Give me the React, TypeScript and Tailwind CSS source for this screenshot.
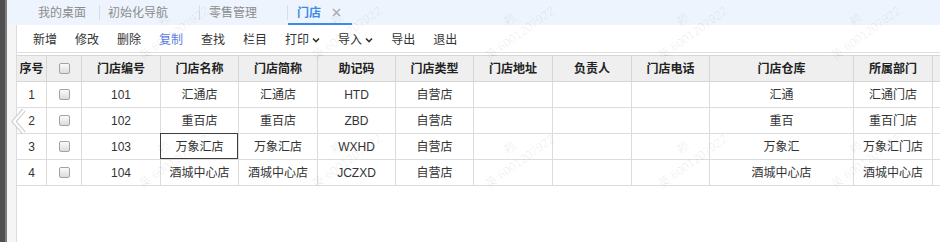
const font = 'font-["Liberation_Sans","Noto_Sans_CJK_SC",sans-serif]';

const columns = ['序号', '', '门店编号', '门店名称', '门店简称', '助记码', '门店类型', '门店地址', '负责人', '门店电话', '门店仓库', '所属部门', ''];

const rows = [
    ['1', '101', '汇通店', '汇通店', 'HTD', '自营店', '', '', '', '汇通', '汇通门店'],
    ['2', '102', '重百店', '重百店', 'ZBD', '自营店', '', '', '', '重百', '重百门店'],
    ['3', '103', '万象汇店', '万象汇店', 'WXHD', '自营店', '', '', '', '万象汇', '万象汇门店'],
    ['4', '104', '酒城中心店', '酒城中心店', 'JCZXD', '自营店', '', '', '', '酒城中心店', '酒城中心店'],
];

const gridCols = 'grid grid-cols-[30px_35px_79px_78px_79px_78px_78px_79px_79px_78px_144px_79px_79px]';

const Checkbox = () => (
    <div className="w-[11px] h-[11px] rounded-[2px] border border-[#a3a3a3] bg-linear-to-b from-[#fbfbfb] to-[#dcdcdc]" />
);

const Caret = () => (
    <svg width="8" height="6" viewBox="0 0 8 6" className="ml-[3px]">
        <path d="M1 1.5 L4 4.5 L7 1.5" fill="none" stroke="#333" strokeWidth="1.6" />
    </svg>
);

const Sep = () => <span className="w-px h-[15px] bg-[#d9dee6]" />;

const toolbar = ['新增', '修改', '删除', '复制', '查找', '栏目', '打印', '导入', '导出', '退出'];

const Watermark = () => (
    <div className="flex items-center justify-center">
        <div className="flex flex-col items-center -rotate-[36deg] text-[12px] leading-[17px] text-black/[0.07]">
            <span>赖</span>
            <span>英:6001207922</span>
        </div>
    </div>
);

export default function App() {
    return (
        <div className={`relative flex w-[940px] h-[242px] overflow-hidden bg-white ${font}`}>
            <div className="w-[5px] bg-[#4f4f4f]" />
            <div className="w-[2px] bg-[#7d7d7d]" />

            <div className="flex-1 flex flex-col min-w-0">
                {/* tabs */}
                <div className="h-[25px] bg-[#eef4fd] flex items-center text-[12px] text-[#8c8c8c]">
                    <div className="w-[92px] pl-[31px]">我的桌面</div>
                    <Sep />
                    <div className="w-[99px] pl-[8px]">初始化导航</div>
                    <Sep />
                    <div className="w-[87px] pl-[9px]">零售管理</div>
                    <Sep />
                    <div className="h-full w-[64px] pl-[9px] flex items-center border-b-2 border-[#3a8ee6] pt-[2px]">
                        <span className="text-[#3a8ee6] font-semibold">门店</span>
                        <svg width="9" height="9" viewBox="0 0 9 9" className="ml-[11px]">
                            <path d="M1 1 L8 8 M8 1 L1 8" stroke="#a6a6a6" strokeWidth="1.3" />
                        </svg>
                    </div>
                </div>

                <div className="flex-1 flex bg-[#f5f5f5] min-h-0">
                    <div className="w-[9px]" />
                    <div className="flex-1 flex flex-col bg-white border-l border-[#dcdcdc] min-w-0 overflow-hidden">
                        {/* toolbar */}
                        <div className="h-[28px] shrink-0 flex items-center gap-[18px] pl-[16px] pt-[2px] border-b border-[#dedede] text-[12px] text-[#333]">
                            {toolbar.map((t) => (
                                <div key={t} className={`flex items-center ${t === '复制' ? 'text-[#5b7fe0]' : ''}`}>
                                    {t}
                                    {(t === '打印' || t === '导入') && <Caret />}
                                </div>
                            ))}
                        </div>

                        {/* grid */}
                        <div className="mt-[2px] w-[995px] text-[12px] text-[#333]">
                            <div className={`${gridCols} h-[27px] bg-[#efefef] border-t border-[#d6d6d6] font-bold text-[#222]`}>
                                {columns.map((c, i) => (
                                    <div key={i} className="flex items-center justify-center border-r border-b border-[#d6d6d6]">
                                        {i === 1 ? <Checkbox /> : c}
                                    </div>
                                ))}
                            </div>
                            {rows.map((r, ri) => (
                                <div key={ri} className={`${gridCols} h-[26px]`}>
                                    {[r[0], 'cb', ...r.slice(1), ''].map((v, ci) => (
                                        <div key={ci} className="relative flex items-center justify-center border-r border-b border-[#dcdcdc]">
                                            {ci === 1 ? <Checkbox /> : v}
                                            {ri === 2 && ci === 3 && (
                                                <div className="absolute -left-px -top-px right-0 bottom-0 border border-[#3f3f3f]" />
                                            )}
                                        </div>
                                    ))}
                                </div>
                            ))}
                        </div>
                    </div>
                </div>
            </div>

            {/* collapse arrow */}
            <svg width="18" height="30" viewBox="0 0 18 30" className="absolute left-[10px] top-[107px]">
                <polyline points="14,3 4,14.5 14,26" fill="none" stroke="#cfcfcf" strokeWidth="4.5" strokeLinejoin="miter" />
                <polyline points="14,3 4,14.5 14,26" fill="none" stroke="#ffffff" strokeWidth="2.2" strokeLinejoin="miter" />
            </svg>

            {/* watermark */}
            <div className="pointer-events-none absolute left-[83px] top-[-37px] grid grid-cols-[repeat(5,173px)] grid-rows-[repeat(2,128px)]">
                {Array.from({ length: 10 }).map((_, i) => (
                    <Watermark key={i} />
                ))}
            </div>
        </div>
    );
}
